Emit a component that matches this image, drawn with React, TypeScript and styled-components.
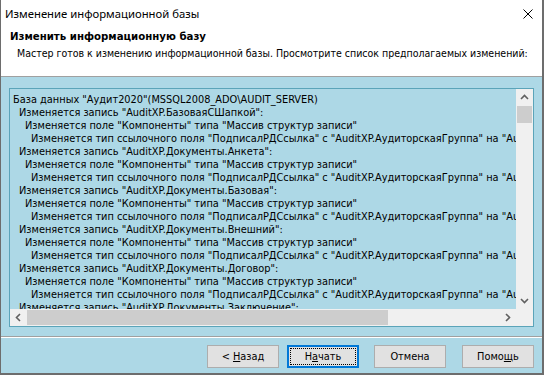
import React from "react";
import styled, { createGlobalStyle, css } from "styled-components";

const Global = createGlobalStyle`
  html, body { margin: 0; padding: 0; background: #fff; }
  body { width: 544px; height: 375px; overflow: hidden; }
  * { box-sizing: border-box; }
`;

const UI_FONT = `"DejaVu Sans Condensed", "DejaVu Sans", sans-serif`;

const Window = styled.div`
  width: 544px;
  height: 375px;
  display: flex;
  flex-direction: column;
  background: #add8e6;
  border-left: 1px solid #6d6d6d;
  border-right: 2px solid #6d6d6d;
  border-bottom: 2px solid #6d6d6d;
  font-family: ${UI_FONT};
  color: #000;
`;

const TopArea = styled.div`
  height: 77px;
  background: #fff;
  border-bottom: 1px solid #a0a0a0;
  display: flex;
  flex-direction: column;
`;

const TitleBar = styled.div`
  height: 27px;
  display: flex;
  align-items: center;
  justify-content: space-between;
  padding-left: 4px;
`;

const TitleText = styled.span`
  font-family: "Noto Sans", sans-serif;
  font-size: 11.3px;
`;

const CloseBox = styled.div`
  width: 28px;
  height: 27px;
  display: flex;
  align-items: center;
  justify-content: center;
`;

const Header = styled.div`
  padding: 2px 0 0 9px;
  display: flex;
  flex-direction: column;
`;

const HeaderTitle = styled.div`
  font-family: "DejaVu Sans", sans-serif;
  font-weight: bold;
  font-size: 10.2px;
  line-height: 16px;
`;

const HeaderSub = styled.div`
  font-size: 10.5px;
  line-height: 16px;
  padding-left: 7px;
`;

const Body = styled.div`
  padding: 11px 8px 0 8px;
`;

const ListBox = styled.div`
  height: 239px;
  border: 1px solid #5ba4b9;
  display: grid;
  grid-template-columns: 1fr 17px;
  grid-template-rows: 1fr 17px;
`;

const ListContent = styled.div`
  overflow: hidden;
  padding: 4px 0 0 3px;
  font-size: 10.9px;
  line-height: 13px;
  white-space: nowrap;
`;

const Line = styled.div<{ $level: number }>`
  padding-left: ${(p) => p.$level * 6}px;
`;

const VScroll = styled.div`
  background: #f0f0f0;
  display: grid;
  grid-template-rows: 17px 17px 1fr 17px;
`;

const HScroll = styled.div`
  background: #f0f0f0;
  display: grid;
  grid-template-columns: 17px 361px 1fr 17px;
`;

const ArrowCell = styled.div`
  display: flex;
  align-items: center;
  justify-content: center;
`;

const VThumb = styled.div`
  background: #cdcdcd;
  margin: 0 1px;
`;

const HThumb = styled.div`
  background: #cdcdcd;
  margin: 1px 0;
`;

const Corner = styled.div`
  background: #f0f0f0;
`;

const Separator = styled.div`
  margin-top: 9px;
  height: 2px;
  border-top: 1px solid #a0a0a0;
  border-bottom: 1px solid #fff;
`;

const ButtonRow = styled.div`
  display: flex;
  justify-content: flex-end;
  padding: 7px 8px 5px 0;
`;

const Button = styled.button<{ $default?: boolean; $gap: number }>`
  position: relative;
  width: 72px;
  height: 23px;
  margin-left: ${(p) => p.$gap}px;
  padding: 0;
  background: #e1e1e1;
  border: 1px solid #adadad;
  font-family: ${UI_FONT};
  font-size: 10.9px;
  color: #000;
  ${(p) =>
    p.$default &&
    css`
      border: 2px solid #0078d7;
      &::after {
        content: "";
        position: absolute;
        inset: 1px;
        border: 1px dotted #000;
      }
    `}
`;

const Chevron = ({ dir }: { dir: "up" | "down" | "left" | "right" }) => {
  const d: Record<string, string> = {
    up: "M1 5 L4.5 1.5 L8 5",
    down: "M1 2 L4.5 5.5 L8 2",
    left: "M5 1 L1.5 4.5 L5 8",
    right: "M2 1 L5.5 4.5 L2 8",
  };
  const horiz = dir === "left" || dir === "right";
  return (
    <svg width={horiz ? 7 : 9} height={horiz ? 9 : 7} viewBox={horiz ? "0 0 7 9" : "0 0 9 7"}>
      <path d={d[dir]} fill="none" stroke="#606060" strokeWidth="1.6" />
    </svg>
  );
};

const records = [
  "AuditXP.БазоваяСШапкой",
  "AuditXP.Документы.Анкета",
  "AuditXP.Документы.Базовая",
  "AuditXP.Документы.Внешний",
  "AuditXP.Документы.Договор",
  "AuditXP.Документы.Заключение",
];

const lines: { level: number; text: string }[] = [
  { level: 0, text: 'База данных "Аудит2020"(MSSQL2008_ADO\\AUDIT_SERVER)' },
];
records.forEach((r) => {
  lines.push({ level: 1, text: `Изменяется запись "${r}":` });
  lines.push({ level: 2, text: 'Изменяется поле "Компоненты" типа "Массив структур записи"' });
  lines.push({
    level: 3,
    text: 'Изменяется тип ссылочного поля "ПодписалРДСсылка" с "AuditXP.АудиторскаяГруппа" на "AuditXP.АудиторскаяГруппаСсылка"',
  });
});

export default function App() {
  return (
    <>
      <Global />
      <Window>
        <TopArea>
          <TitleBar>
            <TitleText>Изменение информационной базы</TitleText>
            <CloseBox>
              <svg width="10" height="10" viewBox="0 0 10 10">
                <path d="M0.5 0.5 L9.5 9.5 M9.5 0.5 L0.5 9.5" stroke="#000" strokeWidth="1" />
              </svg>
            </CloseBox>
          </TitleBar>
          <Header>
            <HeaderTitle>Изменить информационную базу</HeaderTitle>
            <HeaderSub>
              Мастер готов к изменению информационной базы. Просмотрите список предполагаемых изменений:
            </HeaderSub>
          </Header>
        </TopArea>
        <Body>
          <ListBox>
            <ListContent>
              {lines.map((l, i) => (
                <Line key={i} $level={l.level}>
                  {l.text}
                </Line>
              ))}
            </ListContent>
            <VScroll>
              <ArrowCell>
                <Chevron dir="up" />
              </ArrowCell>
              <VThumb />
              <div />
              <ArrowCell>
                <Chevron dir="down" />
              </ArrowCell>
            </VScroll>
            <HScroll>
              <ArrowCell>
                <Chevron dir="left" />
              </ArrowCell>
              <HThumb />
              <div />
              <ArrowCell>
                <Chevron dir="right" />
              </ArrowCell>
            </HScroll>
            <Corner />
          </ListBox>
        </Body>
        <Separator />
        <ButtonRow>
          <Button $gap={0}>
            &lt; <u>Н</u>азад
          </Button>
          <Button $gap={8} $default>
            Н<u>а</u>чать
          </Button>
          <Button $gap={15}>Отмена</Button>
          <Button $gap={16}>
            Помо<u>щ</u>ь
          </Button>
        </ButtonRow>
      </Window>
    </>
  );
}
